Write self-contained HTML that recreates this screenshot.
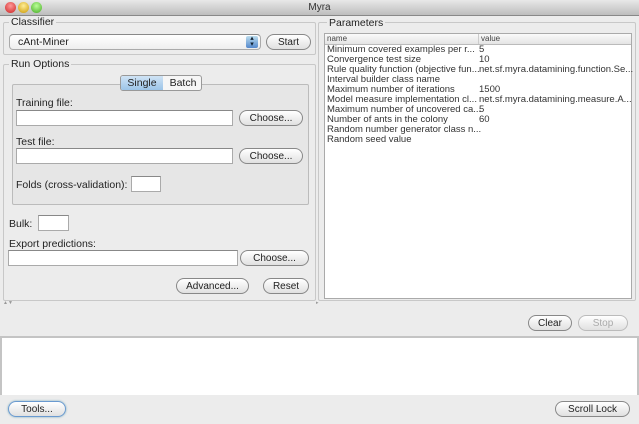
<!DOCTYPE html>
<html><head><style>
*{box-sizing:border-box;margin:0;padding:0}
body{width:639px;height:424px;background:#ececec;font-family:"Liberation Sans",sans-serif;font-size:10.5px;color:#222;position:relative;overflow:hidden}
.a{position:absolute}
.title{left:0;top:0;width:639px;height:16px;background:linear-gradient(#e8e8e8,#bdbdbd);border-bottom:1px solid #888;text-align:center;font-size:10px;line-height:15px;color:#333}
.dot{width:11px;height:11px;border-radius:50%;top:2px}
.grp{border:1px solid #c8c8c8;border-radius:2px}
.lbl{font-size:10.5px;color:#222;background:#ececec;padding:0 2px}
.fld{background:#fff;border:1px solid #aaa;border-top-color:#888}
.btn{border:1px solid #888;border-radius:8px;background:linear-gradient(#fff,#e0e0e0);text-align:center;font-size:10px;line-height:15px;color:#222}
.row{position:absolute;left:2px;font-size:9.5px;line-height:10px;color:#333;white-space:nowrap}
</style></head><body>
<div class="a title">Myra</div>
<div class="a dot" style="left:5px;background:radial-gradient(circle at 50% 35%,#f99,#c22)"></div>
<div class="a dot" style="left:18px;background:radial-gradient(circle at 50% 35%,#fe9,#c90)"></div>
<div class="a dot" style="left:31px;background:radial-gradient(circle at 50% 35%,#bf9,#4a2)"></div>

<div class="a grp" style="left:3px;top:22px;width:313px;height:33px"></div>
<div class="a lbl" style="left:9px;top:16px">Classifier</div>
<div class="a fld" style="left:9px;top:34px;width:252px;height:16px;border-radius:4px;background:linear-gradient(#fff,#eee);padding-left:8px;line-height:14px">cAnt-Miner</div>
<div class="a" style="left:246px;top:36px;width:12px;height:12px;background:linear-gradient(#bde,#58c);border-radius:2px;color:#123;font-size:7px;line-height:6px;text-align:center">▴<br>▾</div>
<div class="a btn" style="left:266px;top:34px;width:45px;height:16px">Start</div>

<div class="a grp" style="left:3px;top:64px;width:313px;height:237px"></div>
<div class="a lbl" style="left:9px;top:58px">Run Options</div>
<div class="a grp" style="left:12px;top:84px;width:297px;height:121px;background:#e6e6e6;border-color:#bbb"></div>
<div class="a" style="left:120px;top:75px;width:82px;height:16px;border:1px solid #999;border-radius:3px;background:#f6f6f6;overflow:hidden">
<div style="position:absolute;left:0;top:0;width:42px;height:14px;background:linear-gradient(#cfe3f5,#9cc4e8);text-align:center;line-height:14px">Single</div>
<div style="position:absolute;left:43px;top:0;width:38px;height:14px;text-align:center;line-height:14px">Batch</div></div>
<div class="a" style="left:16px;top:97px">Training file:</div>
<div class="a fld" style="left:16px;top:110px;width:217px;height:16px"></div>
<div class="a btn" style="left:239px;top:110px;width:64px;height:16px">Choose...</div>
<div class="a" style="left:16px;top:136px">Test file:</div>
<div class="a fld" style="left:16px;top:148px;width:217px;height:16px"></div>
<div class="a btn" style="left:239px;top:148px;width:64px;height:16px">Choose...</div>
<div class="a" style="left:16px;top:179px">Folds (cross-validation):</div>
<div class="a fld" style="left:131px;top:176px;width:30px;height:16px"></div>
<div class="a" style="left:9px;top:218px">Bulk:</div>
<div class="a fld" style="left:38px;top:215px;width:31px;height:16px"></div>
<div class="a" style="left:9px;top:238px">Export predictions:</div>
<div class="a fld" style="left:8px;top:250px;width:230px;height:16px"></div>
<div class="a btn" style="left:240px;top:250px;width:69px;height:16px">Choose...</div>
<div class="a btn" style="left:176px;top:278px;width:73px;height:16px">Advanced...</div>
<div class="a btn" style="left:263px;top:278px;width:46px;height:16px">Reset</div>

<div class="a grp" style="left:318px;top:22px;width:318px;height:279px"></div>
<div class="a lbl" style="left:327px;top:17px">Parameters</div>
<div class="a" style="left:324px;top:33px;width:308px;height:266px;background:#fff;border:1px solid #aaa">
<div style="position:absolute;left:0;top:0;width:306px;height:11px;background:linear-gradient(#fafafa,#e4e4e4);border-bottom:1px solid #bbb;font-size:8px;line-height:10px;color:#444"><span style="position:absolute;left:2px">name</span><span style="position:absolute;left:153px;border-left:1px solid #ccc;padding-left:2px;height:10px">value</span></div>
<div class="row" style="top:11px">Minimum covered examples per r...</div><div class="row" style="top:11px;left:154px">5</div>
<div class="row" style="top:21px">Convergence test size</div><div class="row" style="top:21px;left:154px">10</div>
<div class="row" style="top:31px">Rule quality function (objective fun...</div><div class="row" style="top:31px;left:154px">net.sf.myra.datamining.function.Se...</div>
<div class="row" style="top:41px">Interval builder class name</div>
<div class="row" style="top:51px">Maximum number of iterations</div><div class="row" style="top:51px;left:154px">1500</div>
<div class="row" style="top:61px">Model measure implementation cl...</div><div class="row" style="top:61px;left:154px">net.sf.myra.datamining.measure.A...</div>
<div class="row" style="top:71px">Maximum number of uncovered ca...</div><div class="row" style="top:71px;left:154px">5</div>
<div class="row" style="top:81px">Number of ants in the colony</div><div class="row" style="top:81px;left:154px">60</div>
<div class="row" style="top:91px">Random number generator class n...</div>
<div class="row" style="top:101px">Random seed value</div>
</div>
<div class="a" style="left:3px;top:300px;font-size:5px;color:#999">▲▼</div>
<div class="a" style="left:316px;top:300px;font-size:5px;color:#999">▸</div>

<div class="a btn" style="left:528px;top:315px;width:44px;height:16px">Clear</div>
<div class="a btn" style="left:578px;top:315px;width:50px;height:16px;color:#aaa;border-color:#bbb">Stop</div>
<div class="a" style="left:0;top:336px;width:639px;height:59px;background:#fff;border:2px solid #c4c4c4;border-bottom:none"></div>
<div class="a btn" style="left:8px;top:401px;width:58px;height:16px;border-color:#6a9ad0;box-shadow:0 0 2px #7ab">Tools...</div>
<div class="a btn" style="left:555px;top:401px;width:75px;height:16px">Scroll Lock</div>
</body></html>
